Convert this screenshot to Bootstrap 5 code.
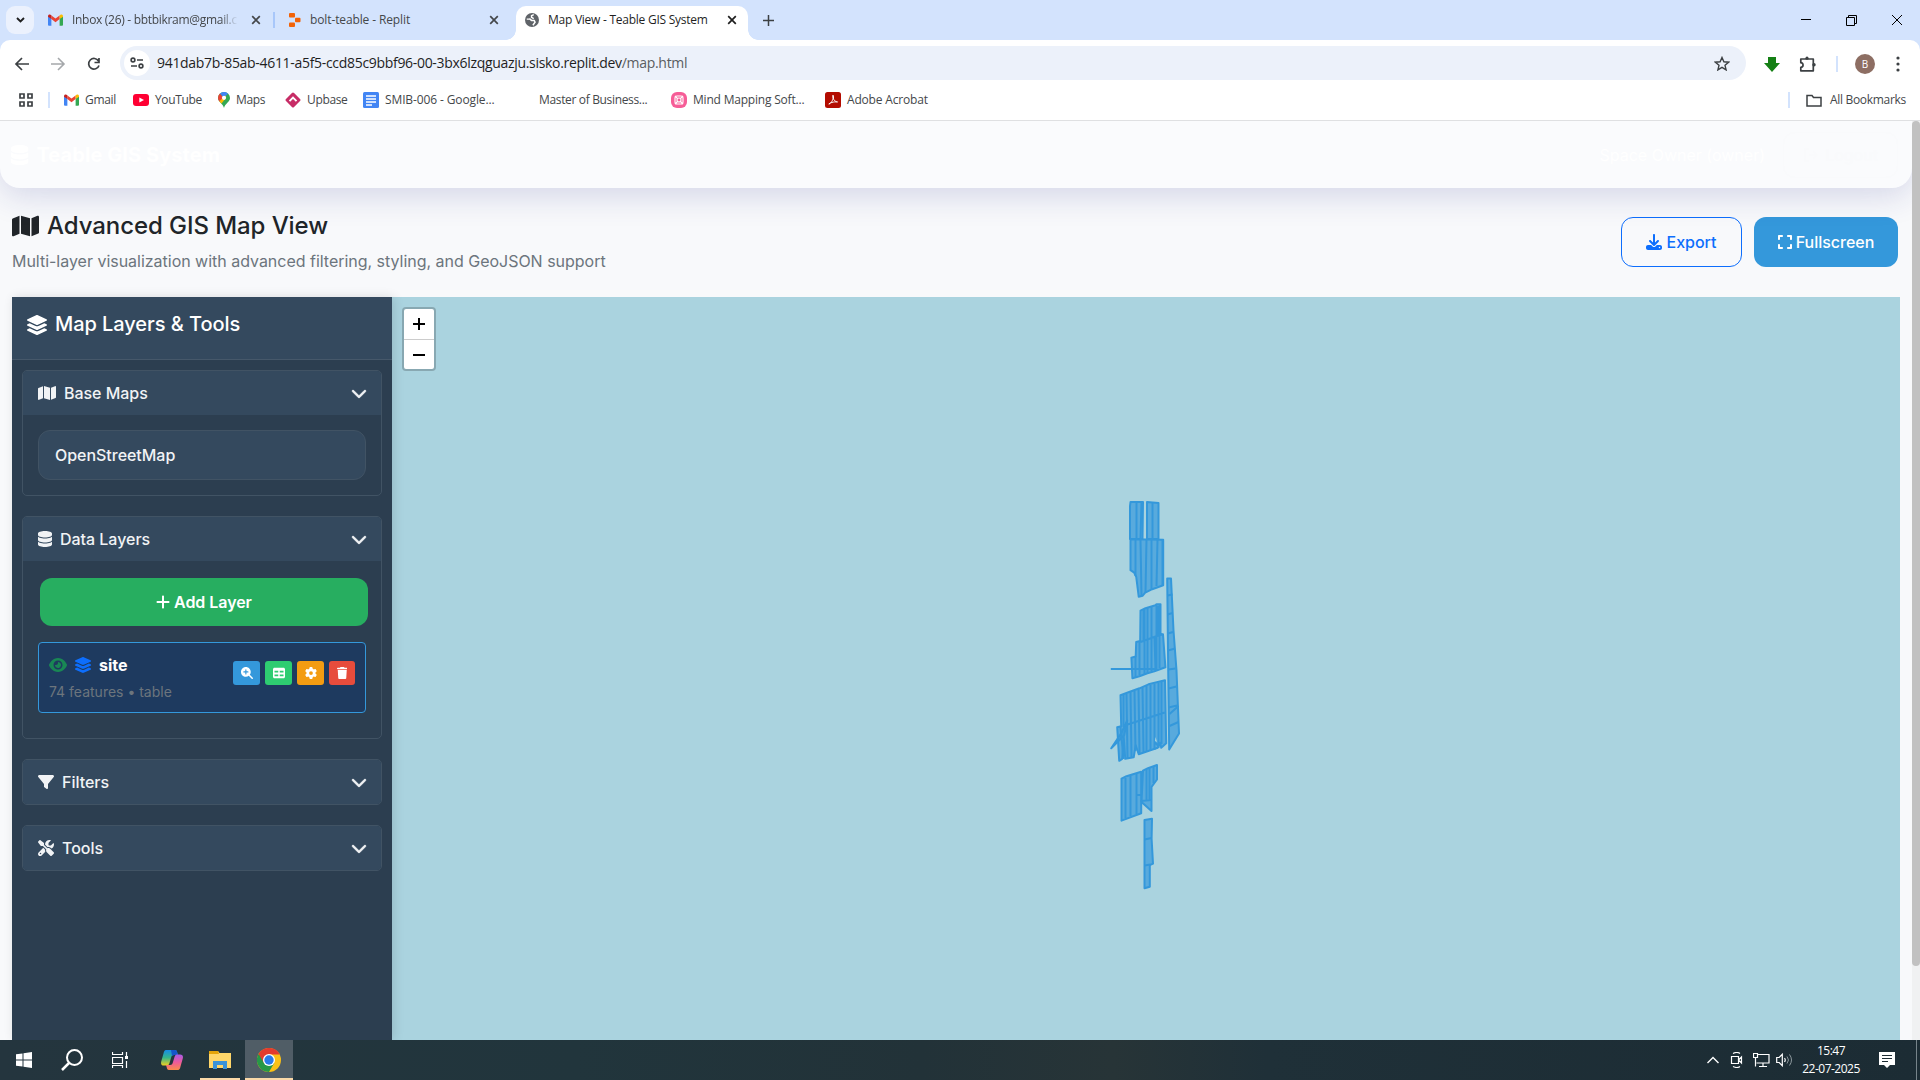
<!DOCTYPE html>
<html lang="en">
<head>
<meta charset="utf-8">
<title>Map View - Teable GIS System</title>
<link href="https://cdn.jsdelivr.net/npm/bootstrap@5.3.0/dist/css/bootstrap.min.css" rel="stylesheet">
<style>
html,body{height:100%;overflow:hidden}
body{font-family:Inter,"Liberation Sans",sans-serif;width:1920px;height:1080px;background:#f8f9fb;color:#212529}
svg{display:block;flex:none}
.fa{height:1em;width:auto;fill:currentColor}
/* browser frame */
.chrome-ui{font-family:"Open Sans","Noto Sans",sans-serif;font-size:12px;letter-spacing:-.3px;color:#44474a;white-space:nowrap;line-height:16px}
.strip{height:40px;background:#d3e3fd}
.tab-search{width:28px;height:28px;margin:6px 0 0 6px;border-radius:9px;background:#ebf1fd}
.tb{height:40px}
.tb1{width:235px;padding-left:8px;margin-left:6px}
.tb2{width:241px;padding-left:13px}
.tb3{width:232px;height:34px;margin-top:6px;padding:0 0 6px 9px;background:#fff;border-radius:10px 10px 0 0;position:relative;color:#1f1f1f}
.tb3::before,.tb3::after{content:"";position:absolute;bottom:0;width:10px;height:10px}
.tb3::before{left:-10px;background:radial-gradient(circle at 0 0,transparent 9.5px,#fff 10px)}
.tb3::after{right:-10px;background:radial-gradient(circle at 100% 0,transparent 9.5px,#fff 10px)}
.t1{width:169px;overflow:hidden;margin:0 10px 0 9px;-webkit-mask-image:linear-gradient(90deg,#000 88%,transparent 98%)}
.t2{width:171px;margin:0 8px 0 8px;letter-spacing:-.12px}
.t3{width:171px;margin:0 8px 0 9px;letter-spacing:-.25px}
.tabsep{width:2px;height:16px;background:#a8c7fa}
.newtab{padding-left:15px}
.winbtns{gap:35px;padding-right:18px}
.toolbar{height:40px;background:#fff;border-radius:10px 10px 0 0}
.corner{background:#d3e3fd}
.navi{width:120px;padding-left:14px;gap:20px}
.omni{width:1626px;height:34px;background:#ecf1fa;border-radius:17px;margin-top:6px;padding:0 16px 0 4px;font-size:14px;color:#1f1f1f;letter-spacing:-.31px}
.site-info{width:26px;height:26px;border-radius:50%;background:#fff;margin-right:7px}
.exts{padding:8px 20px 0 18px}
.avatar{width:20px;height:20px;border-radius:50%;background:#8d6e63;color:#fff;font-size:10px;margin:0 2px 0 -2px}
.vsep{width:2px;height:16px;background:#d3e3fd}
.marks{height:41px;background:#fff;border-bottom:1px solid #dfe0e2;padding:0 14px 0 18px}
.apps{margin-right:14px}
.appsep{margin-right:14px}
.bm{gap:6px;letter-spacing:-.34px}
.w1{width:69px}.w2{width:85px}.w3{width:67px}.w4{width:78px}.w5{width:158px;letter-spacing:-.12px}.w6{width:150px;padding-left:18px}.w7{width:154px;letter-spacing:-.2px}.w8{letter-spacing:-.18px}
.path{color:#5a5d61}
/* page */
.viewport{height:919px;overflow:hidden}
.page{width:1912px;overflow:hidden}
.topnav{height:67px;background:#fafbfd;border-radius:0 0 20px 20px;box-shadow:0 8px 32px rgba(31,38,135,.16);padding:0 14px 0 11px;position:relative}
.brandtxt{font-size:20px;font-weight:700;color:#fff;gap:8px;letter-spacing:.08px}
.owner{color:#fff;font-size:16px;margin-right:18px}
.logout{width:115px;height:46px;border:1px solid #f9fafc;border-radius:12px;color:#f9fafc;font-size:16px;gap:6px}
.pghead{height:109px;padding:23px 14px 0 12px}
.headbtns{gap:12px}
.pgtitle{font-size:24px;font-weight:500;line-height:29px;gap:8px;margin-bottom:9px;letter-spacing:-.07px}
.pgsub{color:#6c757d;font-size:16px;line-height:24px;letter-spacing:-.02px}
.btn-x{height:50px;border-radius:12px;font-weight:500;font-size:16px;gap:4px;margin-top:6px}
.btn-exp{width:121px;color:#0d6efd;border:1px solid #0d6efd}
.btn-full{width:144px;color:#fff;background:#3498db}
.mapwrap{margin:0 12px;height:743px}
.side{width:380px;background:#2c3e50;color:#fff;box-shadow:2px 0 10px rgba(0,0,0,.12);position:relative;z-index:2}
.sidehd{height:63px;background:#34495e;border-bottom:1px solid #46586a;padding:14px 15px;font-size:20px;font-weight:500;line-height:26px;gap:8px;letter-spacing:-.06px}
.sec{margin:10px 10px 20px;border:1px solid #415364;border-radius:5px;overflow:hidden}
.sec + .sec{margin-top:0}
.sechd{height:44px;background:#34495e;padding:0 14px 0 15px;font-size:16px;font-weight:500;color:#f1f3f5;gap:8px;letter-spacing:-.03px}
.secbody{padding:15px}
.secdata{padding-bottom:25px}
.osm{height:50px;border:1px solid #415364;border-radius:12px;background:#34495e;padding:0 16px;font-weight:500;color:#f1f3f5;letter-spacing:-.03px}
.addbtn{height:48px;border-radius:12px;background:#27ae60;margin:2px -2px 16px 2px;font-weight:600;gap:4px;letter-spacing:-.05px}
.lyr{height:71px;border:1px solid #3498db;border-radius:4px;background:#1e3a5f;padding:10px}
.lyrname{font-weight:700;gap:8px;line-height:24px}
.lyrsub{font-size:14px;color:#6c757d;line-height:21px;margin-top:4px}
.acts{gap:5px;margin-top:8px}
.act{display:flex;align-items:center;justify-content:center;width:27px;height:24px;border-radius:3px;font-size:12px;color:#fff}
.a1{background:#3498db}.a2{background:#2ecc71}.a3{background:#f39c12}.a4{background:#e74c3c;width:26px}
.map{background:#aad3df;position:relative}
.zoomctl{position:absolute;left:10px;top:10px;width:34px;height:64px;border:2px solid rgba(0,0,0,.2);background-clip:padding-box;background-color:#fff;border-radius:4px}
.zb{height:29px}
.zb:first-child{border-bottom:1px solid #ccc;height:31px}
.parcel{fill:#3498db;fill-opacity:.7;stroke:#3498db;stroke-width:2;stroke-linejoin:round;stroke-linecap:round}
.lines{fill:none;stroke:#3498db;stroke-width:2}
.sb{width:8px;background:#f0f1f2}
.thumb{height:845px;background:#c1c1c1;border-radius:4px}
/* taskbar */
.taskbar{height:40px;background:linear-gradient(90deg,#24353e 0%,#21353c 30%,#223238 48%,#273437 58%,#1f3038 66%,#1c2c34 100%);color:#fff}
.tk{width:48px;height:40px;border-bottom:2px solid transparent}
.tk svg{position:relative;top:1px}
.tkx{width:40px;margin:0 5px 0 8px;border-color:#fbd9a8}
.tkc{background:#505d66;border-color:#fbd9a8}
.tray{gap:5px}
.up{margin-right:2px}
.snd{margin-left:1px}
.clock{width:70px;line-height:18px;font-family:"Open Sans","Noto Sans",sans-serif;font-size:12px;letter-spacing:-.5px;margin:0 8px 0 -2px}
</style>
<script src="https://cdn.jsdelivr.net/npm/bootstrap@5.3.0/dist/js/bootstrap.bundle.min.js"></script>
</head>
<body class="d-flex flex-column">
<svg width="0" height="0" class="position-absolute" aria-hidden="true">
<symbol id="db" viewBox="0 0 448 512"><path d="M448 80v48c0 44.2-100.3 80-224 80S0 172.2 0 128V80C0 35.8 100.3 0 224 0S448 35.800 448 80zM393.2 214.7c20.8-7.4 39.900-16.900 54.800-28.600V288c0 44.200-100.300 80-224 80S0 332.200 0 288V186.100c14.900 11.800 34 21.200 54.800 28.600C99.700 230.700 159.500 240 224 240s124.300-9.300 169.200-25.300zM0 346.100c14.900 11.800 34 21.200 54.800 28.600C99.700 390.700 159.500 400 224 400s124.300-9.300 169.200-25.300c20.800-7.400 39.900-16.900 54.800-28.600V432c0 44.200-100.300 80-224 80S0 476.200 0 432V346.100z"/></symbol>
<symbol id="mp" viewBox="0 0 576 512"><path d="M384 476.1L192 421.2V35.9L384 90.800V476.100zm32-1.200V88.400L543.100 37.500c15.800-6.300 32.900 5.300 32.900 22.300V394.600c0 9.800-6 18.600-15.100 22.300L416 474.800zM15.100 95.100L160 37.200V423.600L32.900 474.500C17.100 480.800 0 469.200 0 452.200V117.400c0-9.800 6-18.600 15.100-22.300z"/></symbol>
<symbol id="ly" viewBox="0 0 576 512"><path d="M264.500 5.200c14.900-6.900 32.100-6.900 47 0l218.600 101c8.500 3.900 13.900 12.400 13.900 21.800s-5.400 17.900-13.900 21.800l-218.600 101c-14.900 6.900-32.100 6.900-47 0L45.900 149.800C37.400 145.800 32 137.300 32 128s5.400-17.900 13.900-21.800L264.500 5.200zM476.900 209.600l53.200 24.600c8.500 3.900 13.900 12.400 13.900 21.800s-5.400 17.900-13.900 21.800l-218.600 101c-14.900 6.900-32.100 6.900-47 0L45.900 277.800C37.400 273.800 32 265.300 32 256s5.400-17.900 13.900-21.800l53.200-24.600 152 70.200c23.400 10.800 50.400 10.800 73.800 0l152-70.200zm-152 198.200l152-70.200 53.200 24.600c8.500 3.900 13.900 12.400 13.900 21.800s-5.400 17.900-13.900 21.800l-218.600 101c-14.900 6.900-32.100 6.900-47 0L45.900 405.800C37.400 401.800 32 393.300 32 384s5.400-17.900 13.900-21.800l53.200-24.600 152 70.200c23.400 10.800 50.400 10.800 73.800 0z"/></symbol>
<symbol id="cv" viewBox="0 0 512 512"><path d="M233.400 406.600c12.500 12.500 32.800 12.500 45.300 0l192-192c12.500-12.500 12.500-32.800 0-45.300s-32.800-12.500-45.300 0L256 338.700 86.600 169.400c-12.500-12.500-32.800-12.500-45.300 0s-12.500 32.800 0 45.300l192 192z" stroke="currentColor" stroke-width="14"/></symbol>
<symbol id="fl" viewBox="0 0 512 512"><path d="M3.900 54.900C10.500 40.900 24.500 32 40 32H472c15.500 0 29.500 8.900 36.100 22.900s4.600 30.500-5.200 42.500L320 320.900V448c0 12.100-6.800 23.200-17.700 28.600s-23.800 4.300-33.500-3l-64-48c-8.100-6-12.800-15.500-12.800-25.600V320.900L9 97.300C-.7 85.400-2.800 68.800 3.900 54.900z"/></symbol>
<symbol id="pl" viewBox="0 0 448 512"><path d="M256 80c0-17.700-14.300-32-32-32s-32 14.300-32 32V224H48c-17.700 0-32 14.300-32 32s14.300 32 32 32H192V432c0 17.700 14.300 32 32 32s32-14.300 32-32V288H400c17.700 0 32-14.300 32-32s-14.300-32-32-32H256V80z"/></symbol>
<symbol id="ey" viewBox="0 0 576 512"><path d="M288 32c-80.800 0-145.500 36.800-192.600 80.600C48.600 156 17.300 208 2.500 243.700c-3.300 7.900-3.300 16.700 0 24.600C17.300 304 48.600 356 95.400 399.400C142.500 443.200 207.200 480 288 480s145.500-36.800 192.600-80.600c46.800-43.500 78.100-95.400 93-131.100c3.300-7.900 3.300-16.700 0-24.600c-14.900-35.700-46.200-87.700-93-131.100C433.500 68.800 368.800 32 288 32zM144 256a144 144 0 1 1 288 0 144 144 0 1 1-288 0zm144-64c0 35.300-28.700 64-64 64c-7.100 0-13.900-1.200-20.300-3.300c-5.500-1.800-11.900 1.600-11.700 7.400c.3 6.900 1.300 13.800 3.200 20.700c13.700 51.200 66.400 81.600 117.600 67.900s81.600-66.400 67.900-117.600c-11.100-41.500-47.800-69.400-88.600-71.100c-5.800-.2-9.200 6.100-7.400 11.700c2.100 6.400 3.300 13.200 3.300 20.300z"/></symbol>
<symbol id="dl" viewBox="0 0 512 512"><path d="M288 32c0-17.700-14.300-32-32-32s-32 14.300-32 32V274.700l-73.400-73.400c-12.500-12.500-32.800-12.500-45.300 0s-12.500 32.800 0 45.300l128 128c12.500 12.500 32.800 12.500 45.300 0l128-128c12.500-12.500 12.500-32.800 0-45.300s-32.800-12.500-45.300 0L288 274.700V32zM64 352c-35.300 0-64 28.700-64 64v32c0 35.300 28.700 64 64 64H448c35.300 0 64-28.700 64-64V416c0-35.300-28.700-64-64-64H346.500l-45.300 45.300c-25 25-65.500 25-90.500 0L165.500 352H64zm368 56a24 24 0 1 1 0 48 24 24 0 1 1 0-48z"/></symbol>
<symbol id="ex" viewBox="0 0 448 512"><path d="M32 32C14.300 32 0 46.300 0 64v96c0 17.700 14.300 32 32 32s32-14.300 32-32V96h64c17.700 0 32-14.300 32-32s-14.300-32-32-32H32zM64 352c0-17.700-14.300-32-32-32s-32 14.300-32 32v96c0 17.700 14.300 32 32 32h96c17.700 0 32-14.300 32-32s-14.300-32-32-32H64V352zM320 32c-17.700 0-32 14.300-32 32s14.300 32 32 32h64v64c0 17.700 14.300 32 32 32s32-14.300 32-32V64c0-17.700-14.300-32-32-32H320zM448 352c0-17.700-14.300-32-32-32s-32 14.300-32 32v64H320c-17.700 0-32 14.300-32 32s14.300 32 32 32h96c17.700 0 32-14.300 32-32V352z"/></symbol>
<symbol id="zm" viewBox="0 0 512 512"><path d="M416 208c0 45.900-14.900 88.300-40 122.700L502.600 457.400c12.500 12.500 12.500 32.800 0 45.300s-32.800 12.500-45.300 0L330.700 376c-34.400 25.200-76.800 40-122.700 40C93.100 416 0 322.900 0 208S93.100 0 208 0S416 93.100 416 208zM184 296c0 13.300 10.700 24 24 24s24-10.700 24-24V232h64c13.300 0 24-10.700 24-24s-10.700-24-24-24H232V120c0-13.300-10.700-24-24-24s-24 10.700-24 24v64H120c-13.300 0-24 10.700-24 24s10.700 24 24 24h64v64z"/></symbol>
<symbol id="tbl" viewBox="0 0 512 512"><path fill-rule="evenodd" d="M64 32H448c35.300 0 64 28.700 64 64V416c0 35.300-28.700 64-64 64H64c-35.300 0-64-28.700-64-64V96C0 60.700 28.700 32 64 32zM64 160v76H224v-76zM288 160v76H448v-76zM64 320v76H224v-76zM288 320v76H448v-76z"/></symbol>
<symbol id="cg" viewBox="0 0 512 512"><path d="M495.900 166.600c3.200 8.700 .5 18.400-6.400 24.600l-43.300 39.400c1.100 8.300 1.700 16.800 1.700 25.400s-.6 17.100-1.700 25.400l43.300 39.400c6.900 6.200 9.600 15.900 6.400 24.600c-4.400 11.900-9.700 23.300-15.800 34.300l-4.700 8.100c-6.600 11-14 21.400-22.100 31.200c-5.900 7.200-15.700 9.600-24.500 6.800l-55.700-17.700c-13.400 10.300-28.200 18.900-44 25.400l-12.500 57.100c-2 9.100-9 16.300-18.200 17.800c-13.800 2.300-28 3.500-42.500 3.500s-28.700-1.200-42.500-3.500c-9.200-1.500-16.200-8.700-18.200-17.800l-12.500-57.100c-15.800-6.500-30.600-15.100-44-25.400L83.100 425.900c-8.800 2.800-18.600 .3-24.500-6.800c-8.100-9.800-15.500-20.200-22.100-31.200l-4.700-8.100c-6.100-11-11.400-22.400-15.800-34.300c-3.200-8.700-.5-18.400 6.400-24.600l43.300-39.400C64.600 273.100 64 264.600 64 256s.6-17.100 1.700-25.400L22.400 191.200c-6.900-6.200-9.600-15.900-6.400-24.600c4.400-11.900 9.700-23.300 15.800-34.300l4.700-8.100c6.600-11 14-21.400 22.100-31.200c5.900-7.200 15.700-9.600 24.500-6.800l55.700 17.700c13.400-10.300 28.200-18.900 44-25.400l12.500-57.100c2-9.100 9-16.300 18.200-17.800C227.300 1.200 241.500 0 256 0s28.700 1.200 42.500 3.500c9.200 1.500 16.200 8.700 18.200 17.800l12.500 57.100c15.800 6.500 30.600 15.100 44 25.400l55.700-17.700c8.800-2.800 18.600-.3 24.500 6.800c8.100 9.800 15.500 20.200 22.100 31.200l4.700 8.100c6.100 11 11.400 22.400 15.800 34.300zM256 336a80 80 0 1 0 0-160 80 80 0 1 0 0 160z"/></symbol>
<symbol id="tr" viewBox="0 0 448 512"><path d="M135.200 17.700L128 32H32C14.300 32 0 46.300 0 64S14.300 96 32 96H416c17.700 0 32-14.300 32-32s-14.300-32-32-32H320l-7.200-14.300C307.400 6.800 296.300 0 284.200 0H163.800c-12.100 0-23.200 6.800-28.600 17.700zM416 128H32L53.200 467c1.600 25.300 22.600 45 47.900 45H346.900c25.300 0 46.300-19.700 47.900-45L416 128z"/></symbol>
<symbol id="tl" viewBox="0 0 512 512"><path d="M78.600 5C69.100-2.400 55.600-1.500 47 7L7 47c-8.500 8.500-9.400 22-2.100 31.600l80 104c4.500 5.900 11.600 9.400 19 9.400h54.100l109 109c-14.700 29-10 65.400 14.300 89.600l112 112c12.500 12.500 32.800 12.500 45.300 0l64-64c12.500-12.500 12.500-32.800 0-45.300l-112-112c-24.200-24.200-60.600-29-89.600-14.300l-109-109V104c0-7.500-3.500-14.500-9.400-19L78.600 5zM19.900 396.100C7.200 408.800 0 426.100 0 444.100C0 481.600 30.400 512 67.900 512c18 0 35.300-7.200 48-19.900L233.700 374.300c-7.800-20.900-9-43.600-3.600-65.100l-61.700-61.700L19.900 396.100zM512 144c0-10.500-1.100-20.700-3.200-30.500c-2.400-11.200-16.100-14.100-24.200-6l-63.900 63.900c-3 3-7.100 4.700-11.300 4.700H352c-8.800 0-16-7.200-16-16V102.600c0-4.200 1.700-8.300 4.700-11.300l63.900-63.900c8.100-8.100 5.200-21.800-6-24.200C388.700 1.100 378.500 0 368 0C288.500 0 224 64.500 224 144l0 .8 85.300 85.300c36-9.100 75.800 .5 104 28.700L429 274.500c49-23 83-72.800 83-130.500zM56 432a24 24 0 1 1 48 0 24 24 0 1 1-48 0z"/></symbol>
<symbol id="x" viewBox="0 0 10 10"><path d="M1.200 1.200 8.800 8.800M8.800 1.200 1.200 8.800" stroke="currentColor" stroke-width="1.700"/></symbol>
<symbol id="gm" viewBox="0 0 16 12"><path fill="#4285f4" d="M0 2v9a1 1 0 0 0 1 1h2.600V4z"/><path fill="#34a853" d="M16 2v9a1 1 0 0 1-1 1h-2.600V4z"/><path fill="#ea4335" d="M3.600 5V1.200L8 4.500l4.400-3.300V5L8 8.400z"/><path fill="#c5221f" d="M0 2C0 .2 2 -.4 3.600 1v4L0 2.500z"/><path fill="#fbbc04" d="M16 2c0-1.800-2-2.400-3.600-1v4L16 2.500z"/></symbol>
</svg>

<header class="chrome-ui">
  <div class="strip d-flex">
    <div class="tab-search d-flex align-items-center justify-content-center"><svg width="9" height="6"><path d="M1 1l3.500 3.500L8 1" fill="none" stroke="#1f1f1f" stroke-width="1.900"/></svg></div>
    <div class="tb tb1 d-flex align-items-center"><svg width="15" height="12"><use href="#gm"/></svg><span class="t1">Inbox (26) - bbtbikram@gmail.c</span><svg width="10" height="10"><use href="#x"/></svg><i class="tabsep ms-auto"></i></div>
    <div class="tb tb2 d-flex align-items-center"><svg width="14" height="14" viewBox="0 0 14 14" fill="#f26207"><rect x="1" y="0" width="6" height="4.500" rx="1"/><rect x="7" y="4.700" width="5.500" height="4.600" rx="1"/><rect x="1" y="9.500" width="6" height="4.500" rx="1"/></svg><span class="t2">bolt-teable - Replit</span><svg width="10" height="10"><use href="#x"/></svg></div>
    <div class="tb3 d-flex align-items-center"><svg width="14" height="14" viewBox="0 0 16 16"><circle cx="8" cy="8" r="8" fill="#5f6368"/><path d="M10 1.800 7.500 3v2L10 6.500M5 6.500 7.500 8.500h3l1 2-2.500 3.500M2 7h3" fill="none" stroke="#fff" stroke-width="1.700"/></svg><span class="t3">Map View - Teable GIS System</span><svg width="10" height="10"><use href="#x"/></svg></div>
    <div class="newtab d-flex align-items-center"><svg width="11" height="11"><path d="M5.500 0v11M0 5.500h11" stroke="#3c4043" stroke-width="1.500"/></svg></div>
    <div class="d-flex align-items-center ms-auto winbtns"><svg width="10" height="10"><path d="M0 4.500h10" stroke="#000"/></svg><svg width="11" height="11"><path d="M.5 2.500h8v8h-8zM2.500 2.500V.5h8v8h-2" fill="none" stroke="#000"/></svg><svg width="10" height="10"><path d="M0 0l10 10M10 0L0 10" stroke="#000"/></svg></div>
  </div>
  <div class="corner"><div class="toolbar d-flex">
    <div class="navi d-flex align-items-center pt-2"><svg width="16" height="14"><path d="M15 7H2M8 1L2 7l6 6" fill="none" stroke="#3c4043" stroke-width="1.700"/></svg><svg width="16" height="14"><path d="M1 7h13M8 1l6 6-6 6" fill="none" stroke="#a5a8ab" stroke-width="1.600"/></svg><svg width="16" height="16"><path d="M12.500 5A5.300 5.300 0 1 0 13 9.500M13 2v4.500H8.500" fill="none" stroke="#3c4043" stroke-width="1.700"/></svg></div>
    <div class="omni d-flex align-items-center"><span class="site-info d-flex align-items-center justify-content-center"><svg width="14" height="12"><g fill="none" stroke="#3c4043" stroke-width="1.600"><circle cx="3" cy="3" r="1.900"/><path d="M7 3h6M1 9h6"/><circle cx="11" cy="9" r="1.900"/></g></svg></span><span class="urltxt">941dab7b-85ab-4611-a5f5-ccd85c9bbf96-00-3bx6lzqguazju.sisko.replit.dev<span class="path">/map.html</span></span><svg class="ms-auto" width="16" height="15" viewBox="0 0 16 15"><path d="M8 1.500l1.900 4.300 4.700.4-3.600 3.100 1.100 4.600L8 11.400l-4.100 2.500L5 9.300 1.400 6.200l4.700-.4z" fill="none" stroke="#3c4043" stroke-width="1.400"/></svg></div>
    <div class="exts d-flex align-items-center flex-grow-1 justify-content-between"><svg width="16" height="15"><path d="M4 0h8v6h4l-8 9-8-9h4z" fill="#158015"/></svg><svg width="17" height="17" viewBox="0 0 17 17"><path d="M1.800 3h12.500v11.800H1.800v-3.500c3 0 3-4.600 0-4.600z" fill="none" stroke="#3c4043" stroke-width="1.700" stroke-linejoin="round"/><circle cx="8" cy="2.200" r="1.600" fill="#3c4043"/><circle cx="15" cy="8.800" r="1.700" fill="#3c4043"/></svg><i class="vsep"></i><span class="avatar d-flex align-items-center justify-content-center">B</span><svg width="4" height="16" fill="#3c4043"><circle cx="2" cy="2" r="1.600"/><circle cx="2" cy="8" r="1.600"/><circle cx="2" cy="14" r="1.600"/></svg></div>
  </div></div>
  <div class="marks d-flex align-items-center">
    <svg width="16" height="16" class="apps"><path d="M2 2h4v4H2zM10 2h4v4h-4zM2 10h4v4H2zM10 10h4v4h-4z" fill="none" stroke="#3c4043" stroke-width="1.700"/></svg><i class="vsep appsep"></i>
    <div class="bm w1 d-flex align-items-center"><svg width="15" height="12"><use href="#gm"/></svg>Gmail</div>
    <div class="bm w2 d-flex align-items-center"><svg width="16" height="12"><rect width="16" height="12" rx="3" fill="#f03"/><path d="M6.300 3.400v5.200L11 6z" fill="#fff"/></svg>YouTube</div>
    <div class="bm w3 d-flex align-items-center"><svg width="12" height="16" viewBox="0 0 12 16"><path d="M6 0a6 6 0 0 1 6 6c0 4-5 5.500-6 10C5 11.500 0 10 0 6a6 6 0 0 1 6-6z" fill="#34a853"/><path d="M0 6a6 6 0 0 1 2-4.500L6 6 1.500 9.600A6 6 0 0 1 0 6z" fill="#ea4335"/><path d="M2 1.500A6 6 0 0 1 10 1.500L6 6z" fill="#4285f4"/><path d="M1.300 9.300 7.600 3.500 8 6l-4.500 5.600z" fill="#fbbc04"/><circle cx="6" cy="5.800" r="2.100" fill="#fff"/></svg>Maps</div>
    <div class="bm w4 d-flex align-items-center"><svg width="16" height="16"><rect x="2.300" y="2.300" width="11.400" height="11.400" rx="1.500" transform="rotate(45 8 8)" fill="#c72c66"/><path d="M4.500 9.200 8 5.700 11.500 9.200" fill="none" stroke="#fff" stroke-width="1.900"/></svg>Upbase</div>
    <div class="bm w5 d-flex align-items-center"><svg width="16" height="16"><rect width="16" height="16" rx="1.500" fill="#4285f4"/><path d="M3 4h10M3 7h10M3 10h10M3 13h6" stroke="#fff" stroke-width="1.500"/></svg>SMIB-006 - Google...</div>
    <div class="bm w6">Master of Business...</div>
    <div class="bm w7 d-flex align-items-center"><svg width="16" height="16"><rect width="16" height="16" rx="6" fill="#f65d97"/><g fill="none" stroke="#fff" stroke-width="1.100"><rect x="4" y="4" width="8" height="8" rx="2"/><circle cx="8" cy="8" r="2"/><path d="M4 4l2.500 2.500M12 4 9.500 6.500M4 12l2.500-2.500M12 12 9.500 9.500"/></g></svg>Mind Mapping Soft...</div>
    <div class="bm w8 d-flex align-items-center"><svg width="16" height="16"><rect width="16" height="16" rx="2.500" fill="#b30b00"/><path d="M8 3.200c-.8 1.500.3 4 1.500 5.300S13 9.800 12.500 10 8 9 3.800 12c1.800 0 4.600-4.500 4.700-7z" fill="none" stroke="#fff" stroke-width="1"/></svg>Adobe Acrobat</div>
    <i class="vsep ms-auto me-3"></i><svg width="16" height="13" class="me-2"><path d="M1 11.500v-10h5l1.500 2H15v8.500H1z" fill="none" stroke="#3c4043" stroke-width="1.500"/></svg><span class="allbm">All Bookmarks</span>
  </div>
</header>

<main class="viewport d-flex">
  <div class="page">
    <nav class="topnav d-flex align-items-center">
      <div class="brandtxt d-flex align-items-center"><svg class="fa" viewBox="0 0 448 512"><use href="#db"/></svg>Teable GIS System</div>
      <span class="owner ms-auto">Space Owner (owner)</span><span class="logout d-flex align-items-center justify-content-center"><svg class="fa" viewBox="0 0 16 16"><path d="M6 2H2v12h4M6 8h8M10 4l4 4-4 4" fill="none" stroke="currentColor" stroke-width="2"/></svg>Logout</span>
    </nav>
    <section class="pghead d-flex justify-content-between">
      <div><h1 class="pgtitle d-flex align-items-center"><svg class="fa" viewBox="0 0 576 512"><use href="#mp"/></svg>Advanced GIS Map View</h1><p class="pgsub mb-0">Multi-layer visualization with advanced filtering, styling, and GeoJSON support</p></div>
      <div class="headbtns d-flex"><a class="btn-x btn-exp d-flex align-items-center justify-content-center text-decoration-none"><svg class="fa" viewBox="0 0 512 512"><use href="#dl"/></svg>Export</a><a class="btn-x btn-full d-flex align-items-center justify-content-center text-decoration-none"><svg class="fa" viewBox="0 0 448 512"><use href="#ex"/></svg>Fullscreen</a></div>
    </section>
    <div class="mapwrap d-flex">
      <aside class="side">
        <div class="sidehd d-flex"><svg class="fa mt-1" viewBox="32 0 512 512"><use href="#ly" width="576" height="512"/></svg>Map Layers &amp; Tools</div>
        <div class="sec"><div class="sechd d-flex align-items-center"><svg class="fa" viewBox="0 0 576 512"><use href="#mp"/></svg>Base Maps<svg class="fa ms-auto" viewBox="0 0 512 512"><use href="#cv"/></svg></div><div class="secbody"><div class="osm d-flex align-items-center">OpenStreetMap</div></div></div>
        <div class="sec"><div class="sechd d-flex align-items-center"><svg class="fa" viewBox="0 0 448 512"><use href="#db"/></svg>Data Layers<svg class="fa ms-auto" viewBox="0 0 512 512"><use href="#cv"/></svg></div>
          <div class="secbody secdata"><div class="addbtn d-flex align-items-center justify-content-center"><svg class="fa" viewBox="0 0 448 512"><use href="#pl"/></svg>Add Layer</div>
            <div class="lyr d-flex justify-content-between"><div><div class="lyrname d-flex align-items-center"><svg class="fa text-success" viewBox="0 0 576 512"><use href="#ey"/></svg><svg class="fa text-primary" viewBox="32 0 512 512"><use href="#ly" width="576" height="512"/></svg>site</div><div class="lyrsub">74 features • table</div></div>
              <div class="d-flex acts"><span class="act a1"><svg class="fa" viewBox="0 0 512 512"><use href="#zm"/></svg></span><span class="act a2"><svg class="fa" viewBox="0 0 512 512"><use href="#tbl"/></svg></span><span class="act a3"><svg class="fa" viewBox="0 0 512 512"><use href="#cg"/></svg></span><span class="act a4"><svg class="fa" viewBox="0 0 448 512"><use href="#tr"/></svg></span></div></div>
          </div></div>
        <div class="sec"><div class="sechd d-flex align-items-center"><svg class="fa" viewBox="0 0 512 512"><use href="#fl"/></svg>Filters<svg class="fa ms-auto" viewBox="0 0 512 512"><use href="#cv"/></svg></div></div>
        <div class="sec"><div class="sechd d-flex align-items-center"><svg class="fa" viewBox="0 0 512 512"><use href="#tl"/></svg>Tools<svg class="fa ms-auto" viewBox="0 0 512 512"><use href="#cv"/></svg></div></div>
      </aside>
      <div class="map flex-grow-1">
        <svg width="1508" height="743" viewBox="392.500 297 1508 743">
          <g class="parcel">
            <path d="M1131 502h12.500l-.5 37h-12.500v-33zM1147.500 502l11.500 1v36h-11.500z"/>
            <path d="M1131 539.300l32.700.4v45.500l-11 4-7 3.500-2.500 3-4 1-2.500-20-2-4-3.700-2.500z"/>
            <path d="M1167.700 578.500h3.800l2.500 52 3 40 2.500 63-9.800 16-1-80z"/>
            <path d="M1141 610.700l5-2.500 10-3 1-1h4v30.500l2.500-.4 2.400 33-11 4-7 2-8 3-7 2-1-20.500 4.300-1.300.5-14.500 4-1z"/>
            <path d="M1121 695.300l8-3 11-4 9-4 16.500-4 1.200 63-5 4.500-1-5-2.500 5-19 6.500-3-9-2 12-8.500 1.500-1.500-22-1.500 22-3 2-2-33.500 4-1z"/>
            <path d="M1111.700 748.300l10-15 6-13-3 15z"/>
            <path d="M1122 778.700l5-2.500 14.700-4.500v41.600l-19.700 7.300zM1143.500 770.700l5-2.500 9-3.200v14.500l-5.500 7.500v24l-10-9z"/>
            <path d="M1145 820l7.500-1.300-.4 20 1.400 25-3.200 1.500v21.500l-5.300 1.600z"/>
          </g>
          <g class="lines">
            <path d="M1137 502v37M1142 502l-1 37M1153 502v37M1136 540v36M1141 540l1 56M1147 540l-1 52M1152 540v50M1158 540l-1 46M1163 540v45"/>
            <path d="M1168 595.500l5-1M1168 614.500l5-1.500M1168.500 633.500l5-1.500M1168.500 650.500l7-2M1169 669.500l7-1M1169 688.500l8-2M1169 707.500l8.500-2M1170 714l9-8M1170 726l9-4"/>
            <path d="M1145 609v65M1148 608v65M1152 607v64M1157 605v65M1160 604v64M1141 642l22-8M1140 642v33M1136 656v22M1155 637l1 33M1144 610v30M1158.500 606v30M1111.300 669H1158"/>
            <path d="M1124 695v32M1127 694l1 64M1131 692l1 65M1135 691l1 60M1139 689l1 64M1143 687l1 65M1147 686v66M1151 685v66M1155 684v66M1159 683v65M1162 682v62M1123.300 726l42-13.500M1121 727l3 32M1155 742l4 4"/>
            <path d="M1126 778v40M1131 776v40M1137 774v40M1137 795h5M1147 769v32M1150 768v33M1154 767v16M1141 801l11-1M1145 839.500l7-1.500M1145 865.500l6-1"/>
          </g>
          <path d="M1156 737l1.500 5-2-1z" fill="#aad3df"/>
        </svg>
        <div class="zoomctl"><div class="zb d-flex align-items-center justify-content-center"><svg width="12" height="12"><path d="M6 0v12M0 6h12" stroke="#000" stroke-width="2"/></svg></div><div class="zb d-flex align-items-center justify-content-center"><svg width="12" height="2"><path d="M0 1h12" stroke="#000" stroke-width="2"/></svg></div></div>
      </div>
    </div>
  </div>
  <div class="sb"><div class="thumb"></div></div>
</main>

<footer class="taskbar d-flex">
  <div class="tk d-flex align-items-center justify-content-center"><svg width="16" height="16" fill="#fff"><path d="M0 2.300 6.500 1.400v6.100H0zM7.500 1.200 16 0v7.500H7.500zM0 8.500h6.500v6.100L0 13.700zM7.500 8.500H16V16l-8.500-1.200z"/></svg></div>
  <div class="tk d-flex align-items-center justify-content-center"><svg width="22" height="22"><circle cx="13.500" cy="8.500" r="7.500" fill="none" stroke="#fff" stroke-width="2"/><path d="M8 14 1 21" stroke="#fff" stroke-width="2.500"/></svg></div>
  <div class="tk d-flex align-items-center justify-content-center"><svg width="16" height="16"><path d="M.5 0v2.500h10V0M.5 5.500h10v6H.5zM.5 16v-2.500h10V16M14.500 0v4M14.500 9v7" fill="none" stroke="#fff" stroke-width="1.200"/><rect x="13" y="4" width="3" height="3" fill="#fff"/></svg></div>
  <div class="tk d-flex align-items-center justify-content-center ps-2"><svg width="22" height="20" viewBox="0 0 22 20"><defs><linearGradient id="ca" x2="0" y2="1"><stop stop-color="#168be8"/><stop offset=".5" stop-color="#35b58a"/><stop offset="1" stop-color="#f2cf20"/></linearGradient><linearGradient id="cb" x2="0" y2="1"><stop stop-color="#a85be8"/><stop offset=".5" stop-color="#ee5a9a"/><stop offset="1" stop-color="#fb8a4a"/></linearGradient></defs><path d="M5 0h9c2 0 2 2 3 5h-4c-2 0-2.500 1-3 3l-1.500 5c-.6 2-1.500 2.500-3 2.500H3c-3 0-3.500-2-2.500-5l2-7C3 1.500 3.500 0 5 0z" fill="url(#ca)"/><path d="M10 0h4c2 0 2 2 3 5h-4l-2 1z" fill="#1656c8"/><path d="M17 20H8c-2 0-2-2-3-5h4c2 0 2.500-1 3-3l1.500-5c.6-2 1.500-2.500 3-2.500H19c3 0 3.500 2 2.500 5l-2 7c-.5 2-1 3.500-2.500 3.500z" fill="url(#cb)"/></svg></div>
  <div class="tk tkx d-flex align-items-center justify-content-center"><svg width="22" height="19"><path d="M0 0h9l1.500 2H22v15H0z" fill="#ffd76a"/><path d="M0 0h9l1 3H0z" fill="#e5a50a"/><path d="M4 10h14v8h-4v-4H8v4H4z" fill="#3a93d8"/></svg></div>
  <div class="tk tkc d-flex align-items-center justify-content-center"><svg width="24" height="24" viewBox="0 0 24 24"><circle cx="12" cy="12" r="12" fill="#fbc116"/><path d="M12 12 1.600 6A12 12 0 0 0 12 24l5.200-9z" fill="#279847"/><path d="M12 6.500h10.700A12 12 0 0 0 1.600 6L7 15z" fill="#e33b2e"/><circle cx="12" cy="12" r="6" fill="#fff"/><circle cx="12" cy="12" r="4.700" fill="#2a7be8"/></svg></div>
  <div class="tray d-flex align-items-center ms-auto">
    <svg width="12" height="8" class="up"><path d="M.5 7 6 1.500 11.500 7" fill="none" stroke="#fff" stroke-width="1.400"/></svg>
    <svg width="14" height="16" class="mx-1"><path d="M1.500 4.500h7v7h-7zM8.500 8l3-3v6zM3 1.500q4-2 7 0M3 14.500q4 2 7 0" fill="none" stroke="#fff" stroke-width="1.200"/></svg>
    <svg width="17" height="15"><path d="M5 1.500h11v8.500H3.500M10 10v3M6 13.500h8M.5.500h4v4h-4zM2.500 4.500v9" fill="none" stroke="#fff" stroke-width="1.200"/></svg>
    <svg width="17" height="14" class="snd"><path d="M.7 4.500h2.500L6.300 1.300v11.400L3.200 9.500H.7zM8.500 5q1.500 2 0 4" fill="none" stroke="#fff" stroke-width="1.200"/><path d="M11 3.500q3 3.500 0 7M13.500 1.500q4 5.500 0 11" fill="none" stroke="#8d989d"/></svg>
    <div class="clock text-center">15:47<br>22-07-2025</div>
    <svg width="16" height="16" class="me-3"><path d="M0 0h16v13h-5l-3 3-3-3H0z" fill="#fff"/><path d="M3 3.500h10M3 6.500h10M3 9.500h6" stroke="#1e2d34" stroke-width="1.100"/></svg>
    <svg width="4" height="40"><path d="M.5 0v40" stroke="#77848a"/></svg>
  </div>
</footer>
</body>
</html>
